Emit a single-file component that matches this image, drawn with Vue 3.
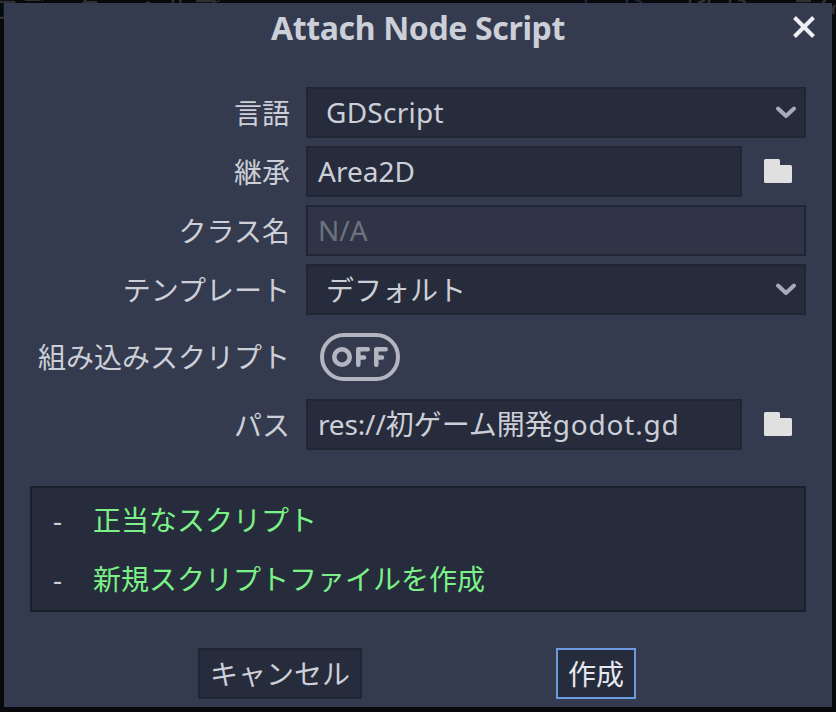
<script setup>
const messages = ['正当なスクリプト', '新規スクリプトファイルを作成']
</script>

<template>
  <main class="screen">
    <div class="menu-behind" aria-hidden="true">
      <span class="menu-left">エディター ヘルプ</span>
    </div>
    <svg class="toolbar-behind" viewBox="0 0 260 20" aria-hidden="true">
      <path class="blue" d="M10 0V3M51 0V3M59 0H62L66 3" />
      <path d="M114 0V3M122 3 129 0M133 3V0M154 0V3M162 0H166L170 3M220 1H235M246 3 250 0" />
      <path d="M259 5Q256 9 258 14" />
    </svg>
    <section class="dialog">
      <header class="titlebar">
        <h1>Attach Node Script</h1>
        <svg class="close" viewBox="0 0 24 24"><path d="M2.5 2.5 21.5 21.5M21.5 2.5 2.5 21.5" /></svg>
      </header>

      <div class="form">
        <label>言語</label>
        <div class="field select latin">
          <span class="language">GDScript</span>
          <svg class="chevron" viewBox="0 0 20 14"><path d="M2 2.5 10 10 18 2.5" /></svg>
        </div>

        <label>継承</label>
        <div class="with-button">
          <div class="field latin">Area2D</div>
          <svg class="folder" viewBox="0 0 28 24"><path d="M1.5 0H14.5Q16 0 16 1.5V6H26.5Q28 6 28 7.5V22.5Q28 24 26.5 24H1.5Q0 24 0 22.5V1.5Q0 0 1.5 0Z" /></svg>
        </div>

        <label>クラス名</label>
        <div class="field disabled latin">N/A</div>

        <label>テンプレート</label>
        <div class="field select">
          <span>デフォルト</span>
          <svg class="chevron" viewBox="0 0 20 14"><path d="M2 2.5 10 10 18 2.5" /></svg>
        </div>

        <label>組み込みスクリプト</label>
        <div class="toggle-cell">
          <svg class="toggle" viewBox="0 0 80 48" role="img" aria-label="OFF">
            <rect x="2" y="2" width="76" height="44" rx="22" />
            <g class="toggle-text">
              <circle cx="22" cy="24" r="7.7" />
              <path d="M38.3 31.7V16.3H47.7M38.3 24.5H44M56.3 31.7V16.3H65.7M56.3 24.5H62" />
            </g>
          </svg>
        </div>

        <label>パス</label>
        <div class="with-button">
          <div class="field latin"><span class="scheme">res://</span>初ゲーム開発<span class="filename">godot.gd</span></div>
          <svg class="folder" viewBox="0 0 28 24"><path d="M1.5 0H14.5Q16 0 16 1.5V6H26.5Q28 6 28 7.5V22.5Q28 24 26.5 24H1.5Q0 24 0 22.5V1.5Q0 0 1.5 0Z" /></svg>
        </div>
      </div>

      <ul class="messages">
        <li v-for="m in messages" :key="m"><span class="dash">-</span><span>{{ m }}</span></li>
      </ul>

      <footer class="actions">
        <button class="cancel">キャンセル</button>
        <button class="create">作成</button>
      </footer>
    </section>
  </main>
</template>

<style>
body { margin: 0; background: #08090d; }
</style>

<style scoped>
* { box-sizing: border-box; }
.screen {
  position: relative;
  width: 836px;
  height: 712px;
  padding: 3px 4px 5px;
  overflow: hidden;
  background: #08090d;
  font: 28px/40px "Noto Sans", "Noto Sans CJK JP", sans-serif;
  color: #cdcfd8;
}
.menu-behind {
  position: absolute;
  left: -9px;
  top: -11px;
  color: #303033;
  white-space: pre;
}
.toolbar-behind {
  position: absolute;
  left: 576px;
  top: 0;
  width: 260px;
  height: 20px;
  fill: none;
  stroke: #303033;
  stroke-width: 2.5;
}
.toolbar-behind .blue { stroke: #1b273c; }
.dialog {
  position: relative;
  display: flex;
  flex-direction: column;
  height: 704px;
  background: #343b4f;
}
.titlebar {
  position: relative;
  height: 84px;
  text-align: center;
}
h1 {
  margin: 0;
  padding-top: 5px;
  font-size: 32px;
  line-height: 40px;
  font-weight: 700;
  letter-spacing: -0.36px;
}
.close {
  position: absolute;
  right: 16px;
  top: 12px;
  width: 24px;
  height: 24px;
  fill: none;
  stroke: #eeeff2;
  stroke-width: 4;
}
.form {
  display: grid;
  grid-template-columns: 260px 500px;
  grid-template-rows: 51px 51px 51px 51px 68px 51px;
  row-gap: 8px;
  column-gap: 16px;
  padding-left: 26px;
}
label {
  align-self: center;
  text-align: right;
  white-space: nowrap;
}
.field {
  display: flex;
  align-items: center;
  height: 51px;
  flex: 1;
  padding: 0 10px;
  border: 2px solid #202633;
  background: #262c3b;
  white-space: nowrap;
}
.latin { padding-bottom: 2px; }
.select { justify-content: space-between; padding: 0 8px 0 18px; }
.select.latin span { margin-top: -2px; }
.language { letter-spacing: 0.25px; }
.scheme { letter-spacing: -0.15px; }
.filename { letter-spacing: 0.8px; }
.disabled { background: #2f3546; color: #6e727f; }
.chevron {
  width: 20px;
  height: 14px;
  fill: none;
  stroke: #a8abb6;
  stroke-width: 4;
  stroke-linecap: round;
  stroke-linejoin: round;
}
.with-button { display: flex; align-items: center; padding-right: 14px; gap: 22px; }
.folder { width: 28px; height: 24px; margin-bottom: 2px; fill: #e0e0e0; }
.toggle-cell { display: flex; align-items: center; padding-left: 14px; }
.toggle {
  width: 80px;
  height: 48px;
  fill: none;
  stroke: #b3b6c1;
  stroke-width: 4;
  stroke-linecap: round;
  stroke-linejoin: round;
}
.toggle-text { stroke-width: 4.6; }
.messages {
  margin: 36px 26px 0;
  padding: 3px 21px;
  height: 126px;
  list-style: none;
  border: 2px solid #1b202d;
  background: #262c3b;
  color: #7cf188;
}
.messages li { display: flex; height: 59px; line-height: 59px; }
.dash { width: 40px; color: #cdcfd8; }
.actions { display: flex; justify-content: space-between; margin: 36px 196px 0 194px; }
button {
  height: 51px;
  padding: 0;
  border: 2px solid #202633;
  border-radius: 0;
  background: #262c3b;
  font: inherit;
  color: #cdcfd8;
}
.cancel { width: 164px; }
.create { width: 80px; border-color: #6d9be0; color: #e6e8ef; }
</style>
